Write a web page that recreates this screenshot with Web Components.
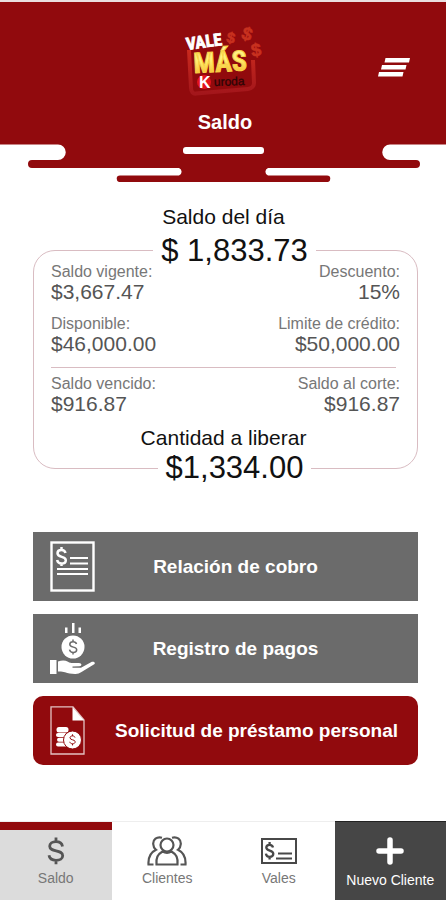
<!DOCTYPE html>
<html lang="es">
<head>
<meta charset="utf-8">
<meta name="viewport" content="width=device-width, initial-scale=1">
<title>Vale Más - Saldo</title>
<style>
    :root {
        --red: #910a0d;
        --grey: #6b6b6b;
        --dark: #464646;
        --line: #d9bcc2;
    }
    body {
        margin: 0;
        font-family: "Liberation Sans", Arial, sans-serif;
        background-color: #FFF;
        color: #111;
    }
</style>
</head>
<body>

<vm-app>
    <vm-header slot="header" title-text="Saldo"></vm-header>

    <vm-balance day="$ 1,833.73" release="$1,334.00">
        <vm-figure slot="current" label="Saldo vigente:" value="$3,667.47"></vm-figure>
        <vm-figure slot="current" label="Descuento:" value="15%" class="end"></vm-figure>
        <vm-figure slot="current" label="Disponible:" value="$46,000.00"></vm-figure>
        <vm-figure slot="current" label="Limite de crédito:" value="$50,000.00" class="end"></vm-figure>
        <vm-figure slot="due" label="Saldo vencido:" value="$916.87"></vm-figure>
        <vm-figure slot="due" label="Saldo al corte:" value="$916.87" class="end"></vm-figure>
    </vm-balance>

    <vm-action slot="actions" icon="report">Relación de cobro</vm-action>
    <vm-action slot="actions" icon="payment">Registro de pagos</vm-action>
    <vm-action slot="actions" icon="loan" class="primary">Solicitud de préstamo personal</vm-action>

    <vm-tab slot="tabs" icon="dollar" class="active">Saldo</vm-tab>
    <vm-tab slot="tabs" icon="people">Clientes</vm-tab>
    <vm-tab slot="tabs" icon="voucher">Vales</vm-tab>
    <vm-tab slot="tabs" icon="plus" class="dark">Nuevo Cliente</vm-tab>
</vm-app>

<script>
(function() {

    // ------------------------------------------------------ ICONS

    const icons = {
        report: `
            <svg width="45" height="51" viewBox="0 0 45 51" fill="none" stroke="#FFF" stroke-width="2.400">
                <rect x="1.5" y="1.5" width="42" height="48"/>
                <path d="M15.500 12c-.5-2-2-3-4-3-2.500 0-4 1.300-4 3.200 0 4.800 8.300 2.500 8.300 7 0 2-1.800 3.300-4.200 3.300-2.300 0-4-1.200-4.500-3.500M11.500 6v3M11.500 22v3" stroke-width="2.500"/>
                <path d="M20 17h18M20 22.500h18M7 28h31M7 33h31" stroke-width="2.200"/>
            </svg>`,
        payment: `
            <svg width="45" height="53" viewBox="0 0 45 53" fill="#FFF">
                <path d="M15 5.500h2.500V11H15zM22 1h2.500v10H22zM28.500 5.500H31V11h-2.500z"/>
                <circle cx="23" cy="25" r="11.500"/>
                <path d="M26.500 22c-.4-1.500-1.600-2.300-3.400-2.300-2 0-3.300 1-3.300 2.600 0 3.800 6.900 1.900 6.900 5.400 0 1.600-1.500 2.700-3.500 2.700-2 0-3.300-1-3.700-2.800M23 17.500v2.200M23 30.400v2.200" fill="none" stroke="#6b6b6b" stroke-width="1.500"/>
                <path d="M0 38h6.500v14H0z"/>
                <path d="M8 39.500c4-1.500 7-1.500 10 .2 1.700 1 3 1.300 5 1.300h6c3 0 3.300 3 .4 3.300l-6.900.2v1.200h8.500l10-5.500c1.500-.8 3.600-.5 3.800.8.100.7-.5 1.200-1 1.600L31.500 50c-2 1.400-4 2-6.500 1.900-4-.2-7-.7-10-1.700-2-.6-4-.8-7-.7z"/>
            </svg>`,
        loan: `
            <svg width="35" height="49" viewBox="0 0 35 49" fill="#FFF">
                <path d="M1 .8h22L34 14v34H1z" fill="none" stroke="#FFF" stroke-opacity=".75" stroke-width="1.300"/>
                <path d="M22.500 1L34 14.500H22.500z"/>
                <rect x="6.500" y="21" width="12" height="5.500" rx="2.500"/>
                <rect x="6" y="27" width="11" height="4" rx="2"/>
                <rect x="7" y="31.700" width="10" height="4" rx="2"/>
                <rect x="6" y="36.400" width="12" height="4" rx="2"/>
                <circle cx="22.500" cy="34" r="9" stroke="#910a0d" stroke-width="1"/>
                <path d="M25 31.500c-.3-1-1.200-1.600-2.500-1.600-1.500 0-2.500.8-2.500 1.900 0 2.700 5.200 1.400 5.200 4 0 1.200-1.100 2-2.700 2-1.400 0-2.400-.7-2.700-2M22.500 28.300v1.600M22.500 37.800v1.600" fill="none" stroke="#910a0d" stroke-width="1"/>
            </svg>`,
        dollar: `
            <svg width="18" height="28" viewBox="0 0 18 28" fill="none" stroke="#555" stroke-width="2.800">
                <path d="M15.500 9.500C15 6.300 12.500 4.700 9 4.700c-3.700 0-6.300 1.800-6.300 4.600 0 6.500 13 2.700 13 9.400 0 2.800-2.800 4.600-6.700 4.600-3.800 0-6.500-1.800-7-5M9 .5v4M9 23.300v4"/>
            </svg>`,
        people: `
            <svg width="40" height="30" viewBox="0 0 40 30" fill="none" stroke="#555" stroke-width="2.200">
                <circle cx="20" cy="9" r="6.500"/>
                <path d="M9.500 28.500c-.5-7 1-10 6-13 3 1.700 6 1.700 9 0 5 3 6.500 6 6 13z"/>
                <path d="M15 1.700C9.500.5 6 3.500 6.200 8c.1 2.300 1 4.300 2.800 5.800C3.500 16.500 1 21 1.500 28.500H6.500"/>
                <path d="M25 1.700c5.500-1.200 9 1.800 8.800 6.300-.1 2.300-1 4.300-2.800 5.800 5.500 2.700 8 7.200 7.500 14.700H33.500"/>
            </svg>`,
        voucher: `
            <svg width="36" height="26" viewBox="0 0 36 26" fill="none" stroke="#484848" stroke-width="2">
                <rect x="1" y="1" width="34" height="24"/>
                <path d="M12 9.500C11.600 7.600 10.500 6.800 8.600 6.800c-2 0-3.300 1-3.300 2.700 0 4 7 2.200 7 6.300 0 1.800-1.500 3-3.600 3-2 0-3.500-1-3.800-3.200M8.600 4v3M8.600 18.500v3" stroke-width="2.300"/>
                <path d="M17 15.500h14M15 20.500h16"/>
            </svg>`,
        plus: `
            <svg width="28" height="28" viewBox="0 0 28 28" fill="none" stroke="#FFF" stroke-width="5.500" stroke-linecap="round">
                <path d="M14 3v22M3 14h22"/>
            </svg>`
    };

    // Logo: tilted card, flying coins and brand name
    const logo = `
        <svg class="logo" width="88" height="78" viewBox="0 0 88 78" role="img" aria-label="Vale Más Kuroda">
            <defs>
                <linearGradient id="gold" x1="0" y1="0" x2="0" y2="1">
                    <stop offset="0" stop-color="#fff6a0"/>
                    <stop offset=".45" stop-color="#ffee70"/>
                    <stop offset="1" stop-color="#f5a81c"/>
                </linearGradient>
                <linearGradient id="frame" x1="0" y1="0" x2="0" y2="1">
                    <stop offset="0" stop-color="#c92a1e"/>
                    <stop offset="1" stop-color="#a3161b"/>
                </linearGradient>
            </defs>
            <path d="M8 28l2 38c.2 4 2 6 5 5.600l52-4.600c4-.4 6-3 6-6l-1-23" fill="none" stroke="url(#frame)" stroke-width="4"/>
            <g fill="#c8311f" stroke="#c8311f" stroke-width=".6" font-family="Liberation Sans" font-weight="700">
                <text x="46" y="21" font-size="15" transform="rotate(12 50 15)">$</text>
                <text x="61" y="18" font-size="18" transform="rotate(18 66 12)">$</text>
                <text x="70" y="34" font-size="18" transform="rotate(-8 75 28)">$</text>
            </g>
            <g font-family="Roboto Condensed, Open Sans Condensed, Liberation Sans Narrow, Liberation Sans" font-weight="700">
                <text x="6" y="28" font-size="17" fill="#FFF" stroke="#FFF" stroke-width=".8" transform="rotate(-8 6 28)">VALE</text>
                <text x="13" y="51" font-size="28" fill="url(#gold)" stroke="#f8d447" stroke-width="1" transform="rotate(-3 13 51)">MÁS</text>
            </g>
            <circle cx="23" cy="60" r="7" fill="#e3141c"/>
            <text x="18" y="66" font-family="Liberation Sans" font-weight="700" font-size="16" fill="#FFF">K</text>
            <text x="33" y="64" font-family="Liberation Sans" font-size="12" fill="#2a0506" stroke="#2a0506" stroke-width=".3" transform="rotate(-2 33 64)">uroda</text>
        </svg>`;


    /**
     * Base class: opens the shadow root and fills it
     */
    class VM_element extends HTMLElement {
        connectedCallback() {
            if (this.dom_ready) {return;}
            this.component = this.attachShadow({ mode: 'open' });
            const template = document.createElement('template');
            template.innerHTML = `<style>*, ::slotted(*) {box-sizing: border-box;}</style>` + this.render();
            this.component.appendChild(template.content.cloneNode(true));
            this.dom_ready = true;
        }
    }


    // ------------------------------------------------------ APP LAYOUT

    class VM_app extends VM_element {
        render() {
            return `
            <style>
                :host {
                    display: flex;
                    flex-direction: column;
                    min-height: 100vh;
                }
                main {padding: 23px 28px 24px 33px;}
                .actions {
                    display: flex;
                    flex-direction: column;
                    gap: 13px;
                    margin-top: 63px;
                }
                nav {
                    display: grid;
                    grid-template-columns: repeat(4, 1fr);
                    margin-top: auto;
                }
            </style>
            <slot name="header"></slot>
            <main>
                <slot></slot>
                <div class="actions"><slot name="actions"></slot></div>
            </main>
            <nav><slot name="tabs"></slot></nav>`;
        }
    }


    // ------------------------------------------------------ HEADER

    class VM_header extends VM_element {
        render() {
            return `
            <style>
                :host {display: block;}
                header {
                    padding: 20px 36px 10px 40px;
                    border-top: 2px solid #eadede;
                    background-color: var(--red);
                    color: #FFF;
                }
                .bar {
                    display: grid;
                    grid-template-columns: 1fr auto 1fr;
                    align-items: center;
                }
                .logo {
                    display: block;
                    grid-column: 2;
                }
                button {
                    justify-self: end;
                    margin: 12px 0 0;
                    padding: 0;
                    border: 0;
                    background: none;
                    cursor: pointer;
                }
                button svg {display: block;}
                h1 {
                    margin: 10px 0 0;
                    font-size: 20px;
                    line-height: 24px;
                    font-weight: 700;
                    text-align: center;
                }
                .fringe {
                    display: block;
                    width: 100%;
                    height: auto;
                }
            </style>
            <header>
                <div class="bar">
                    ${logo}
                    <button type="button" aria-label="Menú">
                        <svg width="32" height="19" viewBox="0 0 32 19" fill="#FFF">
                            <path d="M7.500 0H32l-1 4.500H6.500zM4 7h24.500l-1 4.500H3zM1 14h24.500l-1 4.500H0z"/>
                        </svg>
                    </button>
                </div>
                <h1>${this.getAttribute('title-text')}</h1>
            </header>
            <svg class="fringe" viewBox="0 0 446 38" aria-hidden="true">
                <path fill="#910a0d" d="M0 0H446V.5H390a7.700 7.700 0 0 0 0 15.500H416a4 4 0 0 1 0 8H268a4 4 0 0 0 0 7.500H327a3.300 3.300 0 0 1 0 6.600H120a3.300 3.300 0 0 1 0-6.600H179a4 4 0 0 0 0-7.500H32a4 4 0 0 1 0-8H58a7.700 7.700 0 0 0 0-15.500H0z"/>
                <rect x="183" y="3" width="81" height="7" rx="3" fill="#FFF"/>
            </svg>`;
        }
    }


    // ------------------------------------------------------ BALANCE CARD

    class VM_balance extends VM_element {
        render() {
            return `
            <style>
                :host {display: block;}
                h2 {
                    margin: 0;
                    padding-right: 4px;
                    font-size: 21px;
                    line-height: 24px;
                    font-weight: 400;
                    text-align: center;
                }
                .card {
                    margin-top: 21px;
                    padding: 0 17px;
                    border: 1px solid var(--line);
                    border-radius: 22px;
                }
                .amount {
                    display: flex;
                    justify-content: center;
                    padding-left: 18px;
                    font-size: 31px;
                    line-height: 36px;
                }
                .amount span {
                    padding: 0 8px;
                    background-color: #FFF;
                }
                .amount.top {margin: -18px 0 -6px;}
                .amount.bottom {margin-bottom: -18px;}
                .grid {
                    display: grid;
                    grid-template-columns: auto auto;
                    justify-content: space-between;
                    row-gap: 12px;
                }
                hr {
                    margin: 12px 4px 7px 0;
                    border: 0;
                    border-top: 1px solid var(--line);
                }
                .card h2 {margin-top: 11px;}
            </style>
            <h2>Saldo del día</h2>
            <div class="card">
                <div class="amount top"><span>${this.getAttribute('day')}</span></div>
                <div class="grid"><slot name="current"></slot></div>
                <hr>
                <div class="grid"><slot name="due"></slot></div>
                <h2>Cantidad a liberar</h2>
                <div class="amount bottom"><span>${this.getAttribute('release')}</span></div>
            </div>`;
        }
    }

    class VM_figure extends VM_element {
        render() {
            return `
            <style>
                :host {display: block;}
                :host(.end) {text-align: right;}
                div {
                    font-size: 16px;
                    line-height: 18px;
                    color: #777;
                }
                .value {
                    font-size: 21px;
                    line-height: 22px;
                    color: #555;
                }
            </style>
            <div>${this.getAttribute('label')}</div>
            <div class="value">${this.getAttribute('value')}</div>`;
        }
    }


    // ------------------------------------------------------ ACTION BUTTON

    class VM_action extends VM_element {
        render() {
            return `
            <style>
                :host {display: block;}
                button {
                    display: flex;
                    align-items: center;
                    width: 100%;
                    min-height: 69px;
                    margin: 0;
                    padding: 0 42px 0 17px;
                    border: 0;
                    background-color: var(--grey);
                    color: #FFF;
                    font-family: inherit;
                    font-size: 19px;
                    line-height: 24px;
                    font-weight: 700;
                    cursor: pointer;
                }
                svg {flex: none;}
                span {flex: 1;}
                :host(.primary) button {
                    padding-right: 20px;
                    border-radius: 10px;
                    background-color: var(--red);
                }
                :host(.primary) span {
                    padding-left: 24px;
                    text-align: right;
                }
            </style>
            <button type="button">${icons[this.getAttribute('icon')]}<span><slot></slot></span></button>`;
        }
    }


    // ------------------------------------------------------ TAB

    class VM_tab extends VM_element {
        render() {
            return `
            <style>
                :host {display: block;}
                a {
                    display: flex;
                    flex-direction: column;
                    align-items: center;
                    padding: 5px 0 13px;
                    border-top: 8px solid transparent;
                    box-shadow: 0 -1px #eee;
                    color: #777;
                    font-size: 14px;
                    line-height: 18px;
                    text-decoration: none;
                    white-space: nowrap;
                }
                .icon {
                    display: flex;
                    align-items: center;
                    height: 32px;
                    margin-bottom: 2px;
                }
                :host(.active) a {
                    border-top-color: var(--red);
                    background-color: #dcdcdc;
                }
                :host(.dark) a {
                    padding-bottom: 11px;
                    border-top-color: var(--dark);
                    background-color: var(--dark);
                    box-shadow: 0 -1px #222;
                    color: #FFF;
                }
                :host(.dark) .icon {margin-bottom: 4px;}
            </style>
            <a href="#"><div class="icon">${icons[this.getAttribute('icon')]}</div><slot></slot></a>`;
        }
    }

    customElements.define('vm-app', VM_app);
    customElements.define('vm-header', VM_header);
    customElements.define('vm-balance', VM_balance);
    customElements.define('vm-figure', VM_figure);
    customElements.define('vm-action', VM_action);
    customElements.define('vm-tab', VM_tab);

})();
</script>
</body>
</html>
